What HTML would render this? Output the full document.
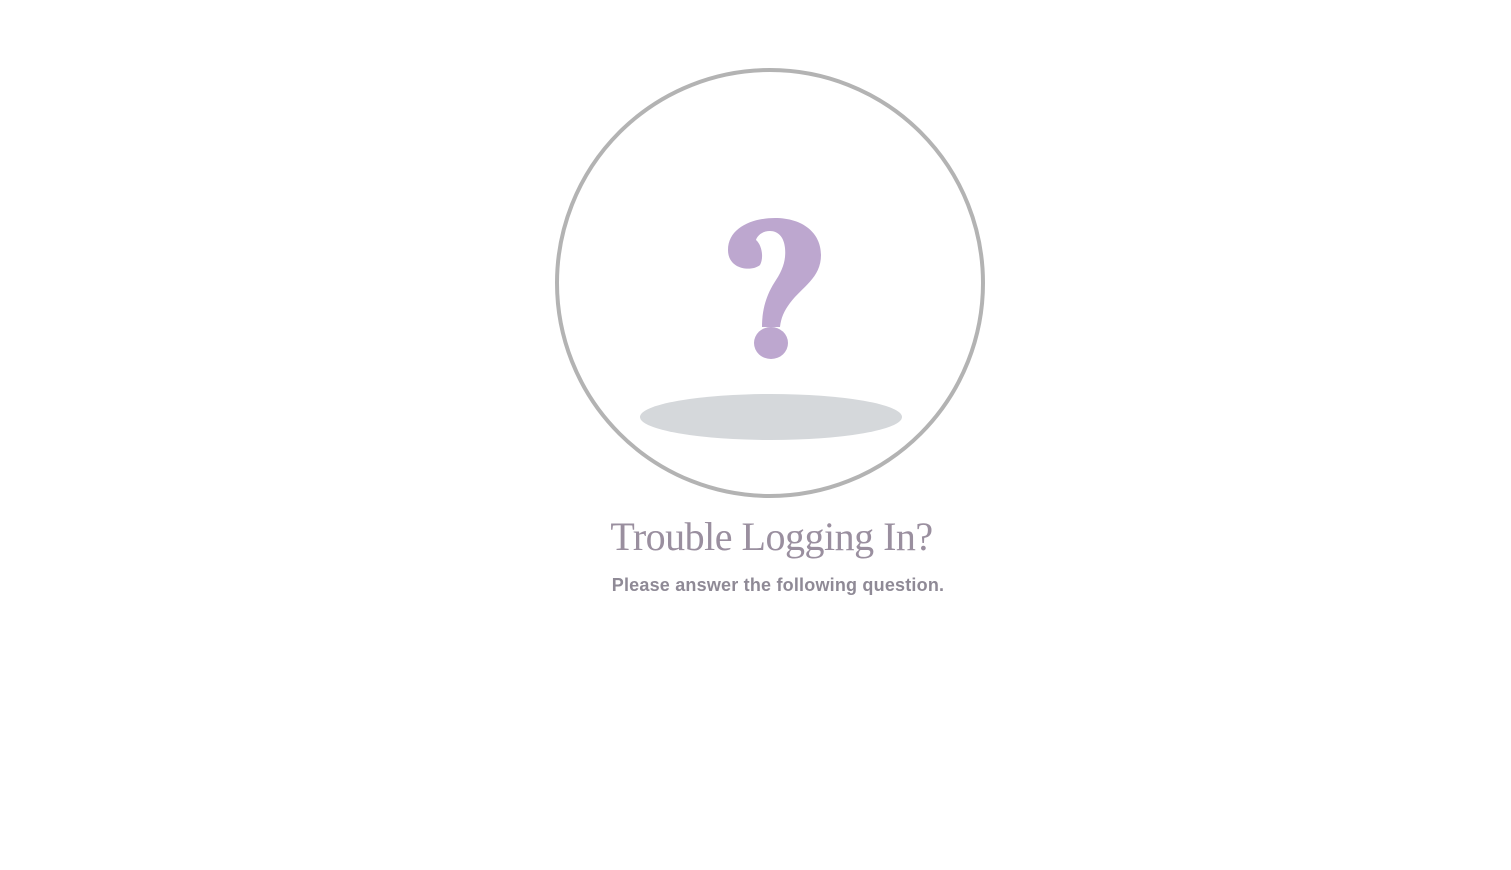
<!DOCTYPE html>
<html><head><meta charset="utf-8"><style>
html,body{margin:0;padding:0;background:#fff;width:1511px;height:870px;overflow:hidden}
.t{position:absolute;left:0;width:1543px;text-align:center;top:513px;font-family:"Liberation Serif",serif;font-size:40px;color:#9a8f9f;letter-spacing:-0.5px}
.s{position:absolute;left:0;width:1556px;text-align:center;top:575px;font-family:"Liberation Sans",sans-serif;font-weight:bold;font-size:18px;color:#8f8a96;letter-spacing:0.2px}
</style></head><body>
<svg width="1511" height="870" style="position:absolute;left:0;top:0">
<circle cx="770" cy="283" r="213" fill="none" stroke="#b3b3b3" stroke-width="4"/>
<ellipse cx="771" cy="417" rx="131" ry="23" fill="#d5d8db"/>
<path fill="#bda7cf" d="M 760 265 C 752 272 728 270 728 250 C 728 228 752 218 775 218 C 803 218 821 233 821 255 C 821 278 802 287 790 303 C 784 311 781 318 780 327 L 762 327 C 762 310 766 295 776 280 C 784 268 786 258 785 248 C 784 237 778 231 770 231 C 762 231 757 236 756 240 C 762 245 764 258 760 265 Z"/>
<ellipse cx="771" cy="343" rx="17" ry="16" fill="#bda7cf"/>
</svg>
<div class="t">Trouble Logging In?</div>
<div class="s">Please answer the following question.</div>
</body></html>
